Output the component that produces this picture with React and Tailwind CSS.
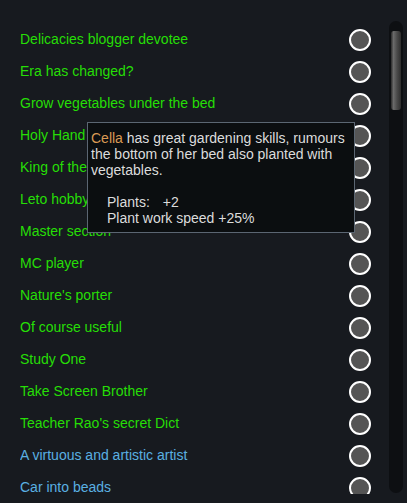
import React from "react";

const traits = [
  { name: "Delicacies blogger devotee", color: "text-[#26de06]" },
  { name: "Era has changed?", color: "text-[#26de06]" },
  { name: "Grow vegetables under the bed", color: "text-[#26de06]" },
  { name: "Holy Hand Grenade", color: "text-[#26de06]" },
  { name: "King of the Hill", color: "text-[#26de06]" },
  { name: "Leto hobby", color: "text-[#26de06]" },
  { name: "Master section", color: "text-[#26de06]" },
  { name: "MC player", color: "text-[#26de06]" },
  { name: "Nature's porter", color: "text-[#26de06]" },
  { name: "Of course useful", color: "text-[#26de06]" },
  { name: "Study One", color: "text-[#26de06]" },
  { name: "Take Screen Brother", color: "text-[#26de06]" },
  { name: "Teacher Rao's secret Dict", color: "text-[#26de06]" },
  { name: "A virtuous and artistic artist", color: "text-[#5ab0e2]" },
  { name: "Car into beads", color: "text-[#5ab0e2]" },
];

function TraitRow({ trait }) {
  return (
    <div className="flex h-[32px] shrink-0 items-center justify-between">
      <span className={`text-[14px] leading-none ${trait.color}`}>{trait.name}</span>
      <span className="mt-[2px] h-[22px] w-[22px] rounded-full border-2 border-white bg-[#555555]" />
    </div>
  );
}

export default function App() {
  return (
    <div
      className="relative flex h-[503px] w-[407px] overflow-hidden bg-[#171a1f]"
      style={{ fontFamily: '"Liberation Sans", Arial, sans-serif' }}
    >
      <div className="ml-[20px] mt-[23px] flex h-[471px] w-[351px] flex-col overflow-hidden">
        {traits.map((t) => (
          <TraitRow key={t.name} trait={t} />
        ))}
      </div>

      {/* scrollbar */}
      <div className="ml-[18px] mt-[21px] flex h-[472px] w-[14px] justify-center rounded-full bg-[#0d0f12] pt-[10px]">
        <div className="h-[79px] w-[10px] rounded-[3px] bg-[linear-gradient(to_right,#2a2a2a,#6a6a6a_25%,#4a4a4a_60%,#2e2e2e)]" />
      </div>

      {/* hover tooltip */}
      <div className="absolute left-[87px] top-[122px] h-[111px] w-[268px] border border-[#5b6672] bg-[#0b0e10] px-[3px] pt-[7px] text-[14px] leading-[16px] text-[#dcdcdc]">
        <p>
          <span className="text-[#d99a55]">Cella</span> has great gardening skills, rumours the
          bottom of her bed also planted with vegetables.
        </p>
        <div className="mt-[16px] pl-[16px]">
          <p>
            Plants:<span className="ml-[13px]">+2</span>
          </p>
          <p>Plant work speed +25%</p>
        </div>
      </div>
    </div>
  );
}
